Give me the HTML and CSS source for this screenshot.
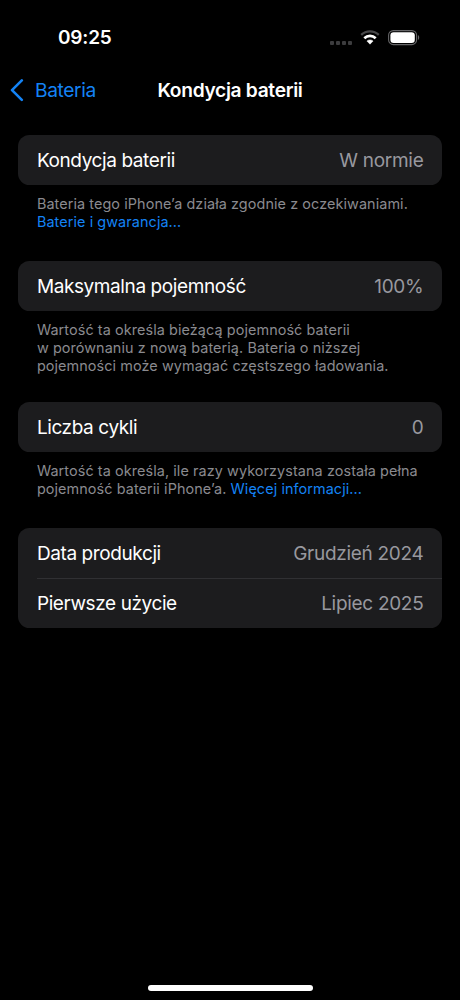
FILE: index.html
```html
<!DOCTYPE html>
<html lang="pl">
<head>
<meta charset="utf-8">
<title>Kondycja baterii</title>
<link rel="stylesheet" href="styles.css">
</head>
<body>
<div class="screen">
  <header class="status">
    <time class="clock">09:25</time>
    <div class="indicators">
      <div class="signal"><i></i><i></i><i></i><i></i></div>
      <svg class="wifi" width="20" height="15" viewBox="0 0 20 15">
        <path d="M1.2 4.9C6.1.2 13.9.2 18.8 4.9" fill="none" stroke="#48484a" stroke-width="2.3"/>
        <path d="M4.3 8.2C7.5 5.2 12.5 5.2 15.7 8.2" fill="none" stroke="#fff" stroke-width="2.7"/>
        <path d="M6.9 11C8.7 9.5 11.3 9.5 13.1 11L10 14.2Z" fill="#fff" stroke="#fff" stroke-width=".5"/>
      </svg>
      <svg class="battery" width="32" height="16" viewBox="0 0 32 16">
        <rect x=".6" y=".6" width="28" height="14" rx="4.7" fill="none" stroke="#656567" stroke-width="1.1"/>
        <rect x="2.4" y="2.3" width="24.4" height="10.6" rx="3.2" fill="#fff"/>
        <path d="M30 5.1C31.6 5.8 31.6 9.3 30 10Z" fill="#656567"/>
      </svg>
    </div>
  </header>
  <nav class="nav">
    <a class="back">
      <svg width="14" height="23" viewBox="0 0 14 23"><path d="M11.8 1.4 2 11.1 11.8 20.8" fill="none" stroke="#1483f5" stroke-width="2.6" stroke-linecap="round" stroke-linejoin="round"/></svg>
      <span>Bateria</span>
    </a>
    <h1 class="title">Kondycja baterii</h1>
  </nav>
  <main class="content">
    <section class="group">
      <div class="card"><div class="row"><span>Kondycja baterii</span><span class="value">W normie</span></div></div>
      <p class="note">Bateria tego iPhone’a działa zgodnie z oczekiwaniami.<br><a class="link">Baterie i gwarancja...</a></p>
    </section>
    <section class="group group-tall">
      <div class="card"><div class="row"><span>Maksymalna pojemność</span><span class="value">100%</span></div></div>
      <p class="note">Wartość ta określa bieżącą pojemność baterii<br>w porównaniu z nową baterią. Bateria o niższej<br>pojemności może wymagać częstszego ładowania.</p>
    </section>
    <section class="group">
      <div class="card"><div class="row"><span>Liczba cykli</span><span class="value">0</span></div></div>
      <p class="note">Wartość ta określa, ile razy wykorzystana została pełna<br>pojemność baterii iPhone’a. <a class="link">Więcej informacji...</a></p>
    </section>
    <section class="group">
      <div class="card">
        <div class="row"><span>Data produkcji</span><span class="value">Grudzień 2024</span></div>
        <div class="row"><span>Pierwsze użycie</span><span class="value">Lipiec 2025</span></div>
      </div>
    </section>
  </main>
  <div class="home-indicator"></div>
</div>
</body>
</html>
```
FILE: styles.css
```css
* { box-sizing: border-box; }
body {
  margin: 0;
  background: #000;
  color: #fff;
  font-family: Inter, "Liberation Sans", sans-serif;
}
.screen {
  width: 460px;
  height: 1000px;
  display: flex;
  flex-direction: column;
  overflow: hidden;
}
.status {
  display: flex;
  justify-content: space-between;
  height: 64px;
  padding: 25px 40px 0 58px;
}
.clock {
  font-size: 19px;
  line-height: 26px;
  font-weight: 600;
  letter-spacing: -0.2px;
}
.indicators {
  display: flex;
  align-items: flex-start;
  padding-top: 4.5px;
}
.signal {
  display: flex;
  gap: 2px;
  margin: 11px 8px 0 0;
}
.signal i {
  width: 4px;
  height: 4px;
  border-radius: 1px;
  background: #3c3c3e;
}
.wifi { margin-right: 8px; }
.nav {
  display: grid;
  grid-template-columns: 1fr auto 1fr;
  align-items: center;
  height: 52px;
  padding: 0 10px;
}
.back {
  display: flex;
  align-items: center;
  gap: 11px;
  color: #1483f5;
  font-size: 19.2px;
  letter-spacing: -0.4px;
}
.title {
  margin: 0;
  font-size: 19.2px;
  font-weight: 600;
  letter-spacing: -0.32px;
}
.content {
  flex: 1;
  padding: 19px 18.4px 0;
}
.group { margin-bottom: 28.8px; }
.group-tall { margin-bottom: 26.2px; }
.card {
  border-radius: 11.5px;
  background: #1c1c1e;
}
.row {
  display: flex;
  align-items: center;
  justify-content: space-between;
  height: 50.2px;
  margin-left: 18.5px;
  padding: 1px 18.2px 0 0;
  font-size: 19px;
  letter-spacing: -0.4px;
}
.row + .row { border-top: 1px solid #303033; }
.value {
  color: #98989f;
  letter-spacing: -0.3px;
}
.note {
  margin: 0;
  padding: 9.8px 18.5px 0;
  color: #8a8a8f;
  font-size: 14.4px;
  line-height: 18.4px;
  letter-spacing: 0.09px;
  white-space: nowrap;
}
.link { color: #1483f5; }
.home-indicator {
  align-self: center;
  width: 165px;
  height: 6px;
  margin-bottom: 9px;
  border-radius: 3px;
  background: #fff;
}
```
